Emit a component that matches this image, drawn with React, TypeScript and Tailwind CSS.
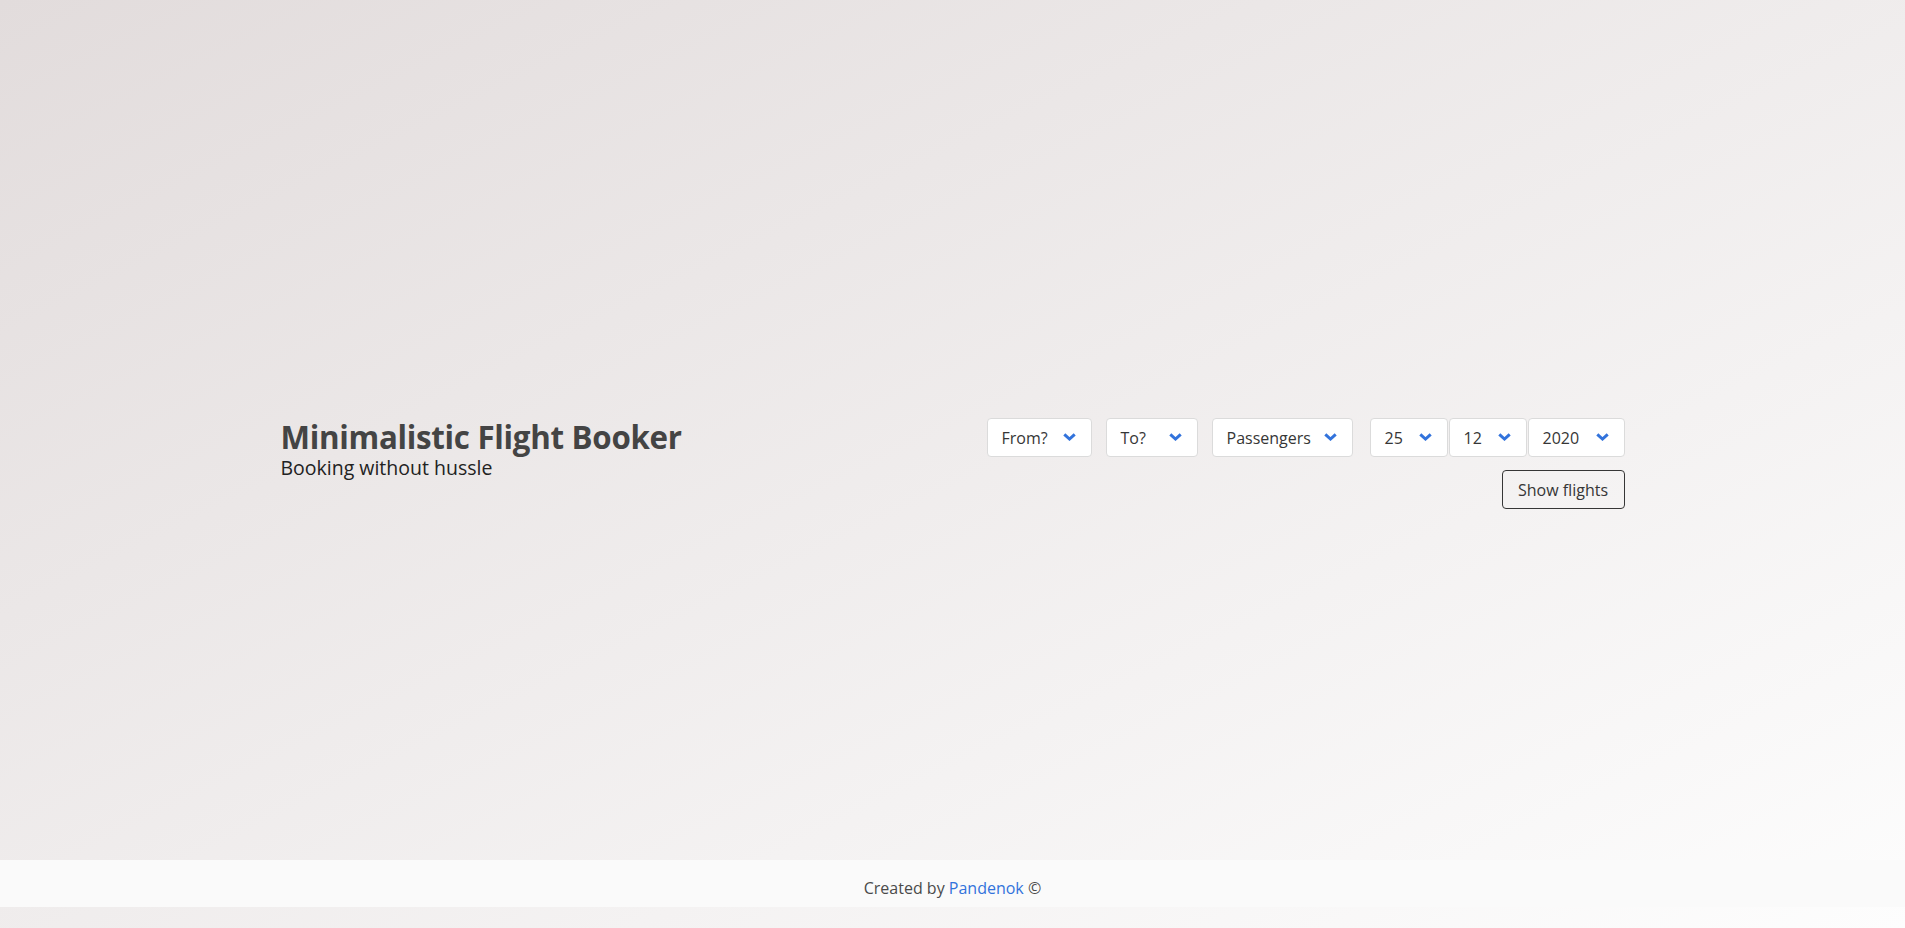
import React from "react";

function Chevron() {
  return (
    <svg width="13" height="8" viewBox="0 0 13 8" className="shrink-0">
      <path d="M1.3 1.3 L6.5 6 L11.7 1.3" fill="none" stroke="#3273dc" strokeWidth="3" strokeLinejoin="miter" />
    </svg>
  );
}

function Select({ label, w }: { label: string; w: string }) {
  return (
    <div
      className={`${w} h-[39px] bg-white border border-[#dbdbdb] rounded-[4px] flex items-center justify-between pl-[14px] pr-[15px] text-[16px] text-[#363636]`}
    >
      <span className="pt-[2px]">{label}</span>
      <Chevron />
    </div>
  );
}

export default function App() {
  return (
    <div
      className="min-h-screen w-full flex flex-col bg-[linear-gradient(to_bottom_right,#e2dcdc,#fdfdfd)]"
      style={{ fontFamily: '"Open Sans", "Noto Sans", sans-serif' }}
    >
      <main className="h-[860px] flex items-center pt-[66px]">
        <div className="w-[1344px] mx-auto flex justify-between items-start">
          <div className="pt-[1px]">
            <h1 className="text-[31.3px] leading-[36px] font-bold tracking-[-0.3px] text-[#444444]">
              Minimalistic Flight Booker
            </h1>
            <p className="text-[19.5px] leading-[25px] text-[#222222]">Booking without hussle</p>
          </div>
          <div className="flex flex-col items-end gap-[13px]">
            <div className="flex">
              <Select label="From?" w="w-[105px]" />
              <div className="w-[14px]" />
              <Select label="To?" w="w-[92px]" />
              <div className="w-[14px]" />
              <Select label="Passengers" w="w-[141px]" />
              <div className="w-[17px]" />
              <Select label="25" w="w-[78px]" />
              <div className="w-[1px]" />
              <Select label="12" w="w-[78px]" />
              <div className="w-[1px]" />
              <Select label="2020" w="w-[97px]" />
            </div>
            <button className="w-[123px] h-[39px] pt-[2px] border border-[#363636] rounded-[4px] text-[16px] text-[#363636] bg-transparent">
              Show flights
            </button>
          </div>
        </div>
      </main>
      <footer className="h-[47px] bg-[#fafafa] flex justify-center pt-[16px] text-[16px] leading-[24px] text-[#4a4a4a]">
        <span>
          Created by <a className="text-[#3273dc]">Pandenok</a> ©
        </span>
      </footer>
      <div className="h-[21px]" />
    </div>
  );
}
